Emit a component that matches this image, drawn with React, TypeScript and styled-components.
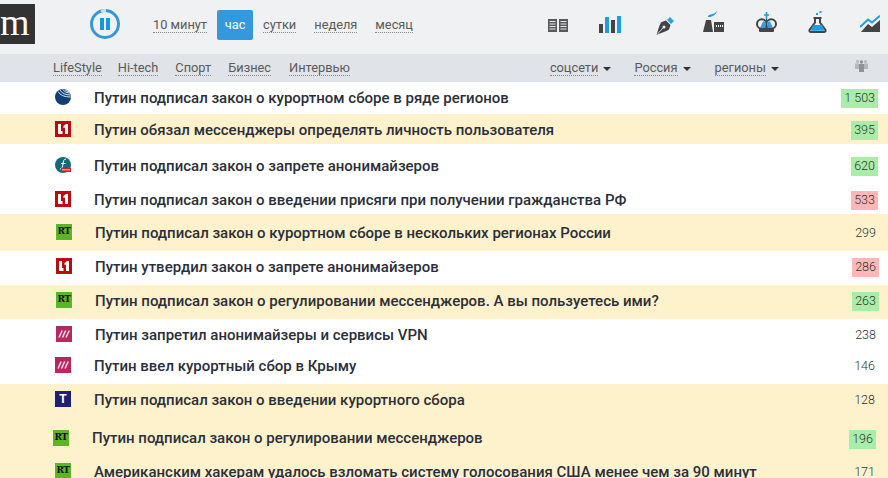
import React from 'react'
import styled, { createGlobalStyle } from 'styled-components'

const GlobalStyle = createGlobalStyle`
  html, body {
    margin: 0;
    padding: 0;
    height: 478px;
    overflow: hidden;
    background: #fff;
    font-family: Roboto, "Liberation Sans", sans-serif;
  }
`

const Header = styled.div`
  height: 54px;
  background: #eff1f3;
  display: flex;
  align-items: flex-start;
`

const Logo = styled.div`
  width: 35px;
  height: 40px;
  margin-top: 4px;
  background: #333;
  color: #fff;
  font-family: "Liberation Serif", serif;
  font-size: 38px;
  line-height: 36px;
`

const PauseWrap = styled.div`
  width: 30px;
  height: 30px;
  margin: 9px 0 0 55px;
`

const TimeNav = styled.div`
  display: flex;
  align-items: center;
  height: 30px;
  margin: 10px 0 0 33px;
`

const TimeLink = styled.span<{ $gap: number }>`
  margin-left: ${p => p.$gap}px;
  font-size: 12.8px;
  line-height: 15px;
  color: #5a5a5a;
  border-bottom: 1px dotted #888;
`

const ActiveTime = styled.span`
  width: 36px;
  height: 30px;
  margin-left: 10px;
  background: #3498db;
  border-radius: 2px;
  color: #fff;
  font-size: 12.8px;
  line-height: 29px;
  text-align: center;
`

const IconBar = styled.div`
  display: flex;
  margin-left: auto;
  padding-right: 8px;
`

const HeadIcon = styled.svg<{ $gap: number; $top: number }>`
  display: block;
  margin-left: ${p => p.$gap}px;
  margin-top: ${p => p.$top}px;
`

const SubNav = styled.div`
  height: 28px;
  background: #e0e3e7;
  display: flex;
  align-items: flex-start;
  padding: 0 20px 0 53px;
`

const SubLink = styled.span<{ $gap: number }>`
  margin: 6px 0 0 ${p => p.$gap}px;
  font-size: 12.8px;
  line-height: 15px;
  color: #5a5a5a;
  border-bottom: 1px dotted #888;
`

const Dropdown = styled.div<{ $gap: number }>`
  display: flex;
  margin-left: ${p => p.$gap}px;
`

const Caret = styled.span`
  width: 0;
  height: 0;
  margin: 13px 0 0 5px;
  border-left: 4px solid transparent;
  border-right: 4px solid transparent;
  border-top: 4px solid #333;
`

const People = styled.svg`
  display: block;
  margin: 6px 0 0 auto;
`

const Row = styled.div<{ $h: number; $top: number; $left: number; $right: number; $hot?: boolean }>`
  height: ${p => p.$h}px;
  box-sizing: border-box;
  padding: ${p => p.$top}px ${p => p.$right}px 0 ${p => p.$left}px;
  background: ${p => (p.$hot ? '#fef2cd' : '#fff')};
  display: flex;
  align-items: flex-start;
  overflow: hidden;
`

const SourceBox = styled.div<{ $bg: string }>`
  width: 16px;
  height: 16px;
  flex: none;
  background: ${p => p.$bg};
  color: #fff;
  font-weight: 700;
  text-align: center;
  overflow: hidden;
`

const RtMark = styled.span`
  display: block;
  color: #111;
  font-family: "DejaVu Serif", serif;
  font-size: 9px;
  line-height: 15px;
  letter-spacing: -0.5px;
`

const TMark = styled.span`
  display: block;
  font-family: "Liberation Sans", sans-serif;
  font-size: 12px;
  line-height: 16px;
`

const Title = styled.div<{ $up?: number }>`
  margin: ${p => -(p.$up ?? 0)}px 0 0 23px;
  font-size: 15px;
  font-weight: 500;
  line-height: 18px;
  color: #2b2f3a;
  white-space: nowrap;
`

const Count = styled.div<{ $mood?: 'up' | 'down' }>`
  margin-left: auto;
  height: 19px;
  padding: 0 3px;
  background: ${p => (p.$mood === 'up' ? '#a8eea8' : p.$mood === 'down' ? '#ffb6b6' : 'transparent')};
  font-size: 12.5px;
  font-weight: 300;
  line-height: 18px;
  color: #333;
`

const IMG_DARK = '#444'
const BLUE = '#1a9fe3'

const PauseIcon = () => (
  <svg width="30" height="30" viewBox="0 0 30 30">
    <circle cx="15" cy="15" r="13.5" fill="none" stroke="#3498db" strokeWidth="3" />
    <path d="M11 2.2 A13.5 13.5 0 0 1 16 1.5" fill="none" stroke="#d5dbe0" strokeWidth="3" />
    <rect x="10" y="9" width="4" height="12" fill="#0d9be2" />
    <rect x="16" y="9" width="4" height="12" fill="#0d9be2" />
  </svg>
)

const Lines = ({ x }: { x: number }) => (
  <g fill="#e6e8ea">
    {[2, 4.5, 7, 9.5].map(y => (
      <rect key={y} x={x + 1.5} y={y} width="6" height="1" />
    ))}
  </g>
)

const BookIcon = () => (
  <HeadIcon $gap={0} $top={19} width="20" height="13" viewBox="0 0 20 13">
    <rect width="9" height="13" fill="#5a5a5a" />
    <rect x="11" width="9" height="13" fill="#5a5a5a" />
    <Lines x={0} />
    <Lines x={11} />
  </HeadIcon>
)

const BarsIcon = () => (
  <HeadIcon $gap={31} $top={16} width="22" height="17" viewBox="0 0 22 17">
    <rect x="0" y="8" width="4" height="9" fill={IMG_DARK} />
    <rect x="6" y="1" width="4" height="16" fill={BLUE} />
    <rect x="12" y="4" width="4" height="13" fill={IMG_DARK} />
    <rect x="18" y="0" width="4" height="17" fill={BLUE} />
  </HeadIcon>
)

const PenIcon = () => (
  <HeadIcon $gap={35} $top={17} width="18" height="18" viewBox="0 0 18 18">
    <path d="M11 3 L14 0 L18 4 L15 7 Z" fill="#2ba3e0" />
    <path d="M10 3.5 L14.5 8 L13 12.5 C10 15 5 15.5 0.5 18 C2 14 3 8 5.5 5 Z" fill={IMG_DARK} />
    <circle cx="8" cy="10" r="1.5" fill="#eff1f3" />
    <path d="M1 17.5 L7 11" stroke="#eff1f3" strokeWidth="0.8" />
  </HeadIcon>
)

const FactoryIcon = () => (
  <HeadIcon $gap={29} $top={11} width="21" height="21" viewBox="0 0 21 21">
    <path d="M5 5 C7 2 10 5 14 0 C13 4 9 6 5 6 Z" fill={BLUE} />
    <path d="M3 9 L8 9 L10 21 L0 21 Z" fill={IMG_DARK} />
    <rect x="11" y="11" width="10" height="10" fill={IMG_DARK} />
    <g fill="#eff1f3">
      {[13, 15, 17, 19].map(x => (
        <rect key={x} x={x} y="14" width="1" height="2" />
      ))}
    </g>
  </HeadIcon>
)

const CrownIcon = () => (
  <HeadIcon $gap={32} $top={12} width="21" height="20" viewBox="0 0 21 20">
    <path d="M10.5 0 V7 M8 3 H13" stroke={BLUE} strokeWidth="1.6" fill="none" />
    <ellipse cx="5.8" cy="12" rx="4.8" ry="4.8" fill="#eff1f3" stroke={IMG_DARK} strokeWidth="2" />
    <ellipse cx="15.2" cy="12" rx="4.8" ry="4.8" fill="#eff1f3" stroke={IMG_DARK} strokeWidth="2" />
    <path d="M4 16 L7 9.5 H9.5 V16 Z M17 16 L14 9.5 H11.5 V16 Z" fill="#2ba3e0" />
    <rect x="10" y="7" width="1" height="9" fill={IMG_DARK} />
    <rect x="3" y="16" width="15" height="4" rx="1" fill={IMG_DARK} />
  </HeadIcon>
)

const FlaskIcon = () => (
  <HeadIcon $gap={31} $top={11} width="19" height="22" viewBox="0 0 19 22">
    <rect x="8" y="2" width="2" height="2" fill={BLUE} />
    <rect x="11.5" y="0" width="2" height="2" fill={BLUE} />
    <path d="M5.5 7 H13.5 M7 7 V11.5 L1.5 19 Q1 21 3 21 H16 Q18 21 17.5 19 L12 11.5 V7" fill="none" stroke={IMG_DARK} strokeWidth="2" />
    <path d="M5 14 H14 L16.5 19.8 H2.5 Z" fill="#1a9fe3" />
  </HeadIcon>
)

const ChartIcon = () => (
  <HeadIcon $gap={33} $top={15} width="20" height="17" viewBox="0 0 20 17">
    <path d="M1 17 L8 9 L12 12 L20 5 V17 Z" fill={IMG_DARK} />
    <path d="M0 12 L8 4.5 L12 7.5 L20 0.8" fill="none" stroke={BLUE} strokeWidth="2" />
  </HeadIcon>
)

const PeopleIcon = () => (
  <People width="13" height="12" viewBox="0 0 13 12">
    <g fill="#b4b8bc">
      <circle cx="2.5" cy="1.5" r="1.5" />
      <circle cx="10.5" cy="1.5" r="1.5" />
      <rect x="0" y="3.5" width="4" height="5.5" />
      <rect x="9" y="3.5" width="4" height="5.5" />
    </g>
    <g fill="#8f9397">
      <circle cx="6.5" cy="2" r="1.7" />
      <rect x="4" y="4" width="5" height="8" />
    </g>
  </People>
)

const GlobeLogo = () => (
  <svg width="16" height="16" viewBox="0 0 16 16" style={{ display: 'block' }}>
    <circle cx="8" cy="8" r="8" fill="#0f3f73" />
    <g fill="none" stroke="#dbe6f0" strokeWidth="1">
      <path d="M5 1 Q8 6 15.5 6" />
      <path d="M7.5 0.5 Q10 4 15.8 4.3" />
      <path d="M10 0.8 Q12 2.5 15 2.8" />
      <path d="M3 2.5 Q6 8 15.8 8" />
    </g>
  </svg>
)

const FinanzLogo = () => (
  <svg width="16" height="16" viewBox="0 0 16 16" style={{ display: 'block' }}>
    <circle cx="8" cy="8" r="8" fill="#136a78" />
    <path d="M11 2 C8.5 2 8.5 4 8 7 C7.5 10 7 12 5 12 M6 6.5 H10.5" fill="none" stroke="#fff" strokeWidth="1" />
    <rect x="6" y="11" width="10" height="4" fill="#d4202c" />
    <rect x="7" y="12.3" width="8" height="1" fill="#f6c8c8" />
  </svg>
)

const LentaLogo = () => (
  <svg width="16" height="16" viewBox="0 0 16 16" style={{ display: 'block' }}>
    <rect width="16" height="16" fill="#b80d0d" />
    <path d="M3 3 H6 V10 H7.5 V13 H3 Z M8.5 5 L11 3 H13 V13 H10 V6.5 L8.5 7 Z" fill="#fff" />
  </svg>
)

const TnLogo = ({ id }: { id: string }) => (
  <svg width="16" height="16" viewBox="0 0 16 16" style={{ display: 'block' }}>
    <defs>
      <linearGradient id={id} x1="0" y1="0" x2="0" y2="1">
        <stop offset="0" stopColor="#a82c60" />
        <stop offset="1" stopColor="#c4235f" />
      </linearGradient>
    </defs>
    <rect width="16" height="16" fill={`url(#${id})`} />
    <path d="M3 11.5 L6.2 4.5 M6.5 11.5 L9.7 4.5 M10 11.5 L13.2 4.5" stroke="#f3d7e3" strokeWidth="1.6" />
  </svg>
)

type Source = 'globe' | 'lenta' | 'fin' | 'rt' | 'pink' | 'navy'

const SourceIcon = ({ kind, uid }: { kind: Source; uid: number }) => {
  if (kind === 'rt') return <SourceBox $bg="#5cb525"><RtMark>RT</RtMark></SourceBox>
  if (kind === 'navy') return <SourceBox $bg="#1f1f77"><TMark>T</TMark></SourceBox>
  if (kind === 'globe') return <SourceBox $bg="transparent"><GlobeLogo /></SourceBox>
  if (kind === 'fin') return <SourceBox $bg="transparent"><FinanzLogo /></SourceBox>
  if (kind === 'lenta') return <SourceBox $bg="transparent"><LentaLogo /></SourceBox>
  return <SourceBox $bg="transparent"><TnLogo id={`tnt${uid}`} /></SourceBox>
}

const rows: {
  h: number
  top: number
  left: number
  right: number
  hot?: boolean
  up?: number
  kind: Source
  title: string
  count: string
  mood?: 'up' | 'down'
}[] = [
  { h: 32, top: 7, left: 55, right: 10, kind: 'globe', title: 'Путин подписал закон о курортном сборе в ряде регионов', count: '1 503', mood: 'up' },
  { h: 30, top: 7, left: 55, right: 10, hot: true, kind: 'lenta', title: 'Путин обязал мессенджеры определять личность пользователя', count: '395', mood: 'up' },
  { h: 40, top: 13, left: 55, right: 10, kind: 'fin', title: 'Путин подписал закон о запрете анонимайзеров', count: '620', mood: 'up' },
  { h: 30, top: 7, left: 55, right: 10, kind: 'lenta', title: 'Путин подписал закон о введении присяги при получении гражданства РФ', count: '533', mood: 'down' },
  { h: 37, top: 10, left: 56, right: 9, hot: true, kind: 'rt', title: 'Путин подписал закон о курортном сборе в нескольких регионах России', count: '299' },
  { h: 34, top: 7, left: 56, right: 9, kind: 'lenta', title: 'Путин утвердил закон о запрете анонимайзеров', count: '286', mood: 'down' },
  { h: 34, top: 7, left: 56, right: 9, hot: true, kind: 'rt', title: 'Путин подписал закон о регулировании мессенджеров. А вы пользуетесь ими?', count: '263', mood: 'up' },
  { h: 33, top: 7, left: 56, right: 9, kind: 'pink', title: 'Путин запретил анонимайзеры и сервисы VPN', count: '238' },
  { h: 32, top: 5, left: 55, right: 10, kind: 'pink', title: 'Путин ввел курортный сбор в Крыму', count: '146' },
  { h: 36, top: 7, left: 55, right: 10, hot: true, kind: 'navy', title: 'Путин подписал закон о введении курортного сбора', count: '128' },
  { h: 37, top: 10, left: 53, right: 12, hot: true, up: 1, kind: 'rt', title: 'Путин подписал закон о регулировании мессенджеров', count: '196', mood: 'up' },
  { h: 40, top: 6, left: 55, right: 10, hot: true, kind: 'rt', title: 'Американским хакерам удалось взломать систему голосования США менее чем за 90 минут', count: '171' },
]

const App = () => (
  <>
    <GlobalStyle />
    <Header>
      <Logo>m</Logo>
      <PauseWrap>
        <PauseIcon />
      </PauseWrap>
      <TimeNav>
        <TimeLink $gap={0}>10 минут</TimeLink>
        <ActiveTime>час</ActiveTime>
        <TimeLink $gap={10}>сутки</TimeLink>
        <TimeLink $gap={18}>неделя</TimeLink>
        <TimeLink $gap={18}>месяц</TimeLink>
      </TimeNav>
      <IconBar>
        <BookIcon />
        <BarsIcon />
        <PenIcon />
        <FactoryIcon />
        <CrownIcon />
        <FlaskIcon />
        <ChartIcon />
      </IconBar>
    </Header>
    <SubNav>
      <SubLink $gap={0}>LifeStyle</SubLink>
      <SubLink $gap={16}>Hi-tech</SubLink>
      <SubLink $gap={17}>Спорт</SubLink>
      <SubLink $gap={17}>Бизнес</SubLink>
      <SubLink $gap={18}>Интервью</SubLink>
      <Dropdown $gap={200}>
        <SubLink $gap={0}>соцсети</SubLink>
        <Caret />
      </Dropdown>
      <Dropdown $gap={23}>
        <SubLink $gap={0}>Россия</SubLink>
        <Caret />
      </Dropdown>
      <Dropdown $gap={24}>
        <SubLink $gap={0}>регионы</SubLink>
        <Caret />
      </Dropdown>
      <PeopleIcon />
    </SubNav>
    {rows.map((r, i) => (
      <Row key={r.title} $h={r.h} $top={r.top} $left={r.left} $right={r.right} $hot={r.hot}>
        <SourceIcon kind={r.kind} uid={i} />
        <Title $up={r.up}>{r.title}</Title>
        <Count $mood={r.mood}>{r.count}</Count>
      </Row>
    ))}
  </>
)

export default App
